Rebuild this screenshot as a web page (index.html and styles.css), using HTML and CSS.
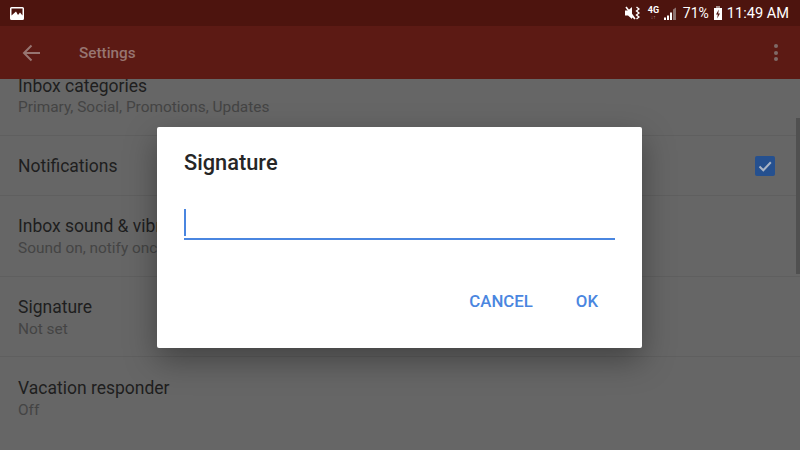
FILE: index.html
```html
<!DOCTYPE html>
<html lang="en">
  <head>
    <meta charset="UTF-8" />
    <meta name="viewport" content="width=device-width, initial-scale=1.0" />
    <title>Settings</title>
    <link rel="stylesheet" href="styles.css">
  </head>
  <body>
    <div class="status-bar">
      <svg class="pic-icon" width="14" height="13" viewBox="0 0 14 13">
        <path fill="#fff" d="M1.5 0h11A1.5 1.5 0 0 1 14 1.5v10a1.5 1.5 0 0 1-1.500 1.500h-11A1.500 1.500 0 0 1 0 11.500v-10A1.500 1.500 0 0 1 1.500 0z"/>
        <path fill="#4d140e" d="M1.500 1.500h11v7l-2.500-3-2 2.500-2-3.500-4.500 4z"/>
      </svg>
      <div class="status-right">
        <svg class="mute-icon" width="15" height="14" viewBox="0 0 15 14">
          <path fill="#fff" d="M0 4.500h3L7 1v10.500L10 13 1 2.500 7 9v4L3 9.500H0z"/>
          <path fill="none" stroke="#fff" stroke-width="1.500" d="M1 1l9 12"/>
          <path fill="none" stroke="#fff" stroke-width="1.400" d="M11.500 1l2.500 2-2.500 2 2.500 2-2.500 2 2.500 2-2.500 2"/>
        </svg>
        <div class="net-type">4G<span class="net-arrows">↓↑</span></div>
        <svg class="signal-icon" width="13" height="13" viewBox="0 0 13 13">
          <path fill="#fff" d="M0 10.500h2V13H0zM3 8.500h2V13H3zM6 5.500h2V13H6z"/>
          <path fill="#8d7370" d="M9 2.500l3-2V13H9z"/>
        </svg>
        <span class="pct">71%</span>
        <svg class="batt-icon" width="8" height="14" viewBox="0 0 8 14">
          <path fill="#a58f8c" d="M2 0h4v2H2z"/>
          <path fill="#fff" d="M0 2h8v12H0z"/>
          <path fill="#4d140e" d="M4.800 3.500L2 8.500h1.800L3.200 12.500 6 7.500H4.200z"/>
        </svg>
        <span class="clock">11:49 AM</span>
      </div>
    </div>

    <div class="toolbar">
      <svg class="back-icon" width="18" height="18" viewBox="0 0 18 18">
        <path fill="none" stroke="#977571" stroke-width="2" d="M18 9H2M9.500 1.500L2 9l7.500 7.500"/>
      </svg>
      <div class="toolbar-title">Settings</div>
      <div class="more-dots"><i></i><i></i><i></i></div>
    </div>

    <div class="list">
      <div class="row row-first">
        <div class="row-text">
          <div class="row-title">Inbox categories</div>
          <div class="row-sub">Primary, Social, Promotions, Updates</div>
        </div>
      </div>
      <div class="row row-short">
        <div class="row-text">
          <div class="row-title">Notifications</div>
        </div>
        <div class="checkbox">
          <svg width="20" height="20" viewBox="0 0 20 20">
            <path fill="none" stroke="#aab5c6" stroke-width="2" d="M4.500 10.500l3.800 3.700 7.500-8"/>
          </svg>
        </div>
      </div>
      <div class="row">
        <div class="row-text">
          <div class="row-title">Inbox sound &amp; vibrate</div>
          <div class="row-sub">Sound on, notify once</div>
        </div>
      </div>
      <div class="row row-narrow">
        <div class="row-text">
          <div class="row-title">Signature</div>
          <div class="row-sub">Not set</div>
        </div>
      </div>
      <div class="row row-last">
        <div class="row-text">
          <div class="row-title">Vacation responder</div>
          <div class="row-sub">Off</div>
        </div>
      </div>
      <div class="scrollbar"></div>
    </div>

    <div class="dialog-layer">
      <div class="dialog">
        <div class="dialog-title">Signature</div>
        <div class="field"><span class="caret"></span></div>
        <div class="dialog-actions">
          <span class="btn">CANCEL</span>
          <span class="btn">OK</span>
        </div>
      </div>
    </div>
  </body>
</html>
```

FILE: styles.css
```css
* {
  margin: 0;
  padding: 0;
  box-sizing: border-box;
}
body {
  position: relative;
  width: 800px;
  height: 450px;
  overflow: hidden;
  background-color: #666;
  font-family: Roboto, "Liberation Sans", sans-serif;
}
.status-bar {
  position: relative;
  z-index: 2;
  height: 26px;
  display: flex;
  justify-content: space-between;
  align-items: center;
  padding: 0 11px 0 10px;
  background-color: #4d140e;
  color: #fff;
}
.status-right {
  display: flex;
  align-items: center;
}
.mute-icon {
  margin-right: 8px;
}
.net-type {
  width: 11px;
  margin-right: 5px;
  font-size: 9px;
  font-weight: 700;
  line-height: 9px;
  text-align: center;
}
.net-arrows {
  display: block;
  font-size: 5px;
  line-height: 5px;
  color: #a58f8c;
}
.signal-icon {
  margin-right: 6px;
}
.pct {
  margin-right: 5px;
  font-size: 14px;
}
.batt-icon {
  margin-right: 5px;
}
.clock {
  font-size: 14.600px;
}
.toolbar {
  position: relative;
  z-index: 1;
  height: 53px;
  display: flex;
  align-items: center;
  padding: 0 22px;
  background-color: #5c1a14;
}
.back-icon {
  margin-right: 39px;
}
.toolbar-title {
  flex: 1;
  font-size: 15.300px;
  font-weight: 500;
  color: #977571;
}
.more-dots {
  display: flex;
  flex-direction: column;
  gap: 2.500px;
}
.more-dots i {
  width: 4px;
  height: 4px;
  border-radius: 50%;
  background-color: #7f6a67;
}
.list {
  position: relative;
  height: 371px;
}
.row {
  height: 81px;
  display: flex;
  align-items: center;
  justify-content: space-between;
  padding: 3px 25px 0 18px;
  border-bottom: 1px solid #5f5f5f;
}
.row-first {
  height: 57px;
  align-items: flex-start;
  padding-top: 0;
}
.row-short {
  height: 60px;
  padding-top: 2px;
}
.row-narrow {
  height: 80px;
}
.row-last {
  border-bottom: 0;
}
.row-title {
  font-size: 17.500px;
  line-height: 21px;
  color: #1e1e1e;
}
.row-sub {
  margin-top: 1px;
  font-size: 15.400px;
  line-height: 21px;
  color: #444;
}
.row-first .row-title {
  line-height: 14px;
}
.row-first .row-sub {
  margin-top: 3px;
  line-height: 22px;
}
.checkbox {
  width: 20px;
  height: 20px;
  margin-top: -2px;
  border-radius: 2px;
  background-color: #25508f;
}
.checkbox svg {
  display: block;
}
.scrollbar {
  position: absolute;
  top: 39px;
  right: 0;
  width: 4px;
  height: 156px;
  background-color: #505050;
}
.dialog-layer {
  position: absolute;
  z-index: 3;
  top: 26px;
  left: 0;
  right: 0;
  bottom: 0;
  display: flex;
  align-items: center;
  justify-content: center;
  padding: 0 1px 2px 0;
}
.dialog {
  width: 485px;
  height: 221px;
  padding: 22px 27px 0;
  border-radius: 2px;
  background-color: #fff;
  box-shadow: 0 12px 32px rgba(0, 0, 0, 0.35);
}
.dialog-title {
  font-size: 21.800px;
  font-weight: 500;
  line-height: 28px;
  color: #262626;
}
.field {
  height: 41px;
  margin-top: 22px;
  padding-top: 10px;
  border-bottom: 2px solid #4a86e0;
}
.caret {
  display: block;
  width: 2px;
  height: 27px;
  background-color: #4a86e0;
}
.dialog-actions {
  display: flex;
  justify-content: flex-end;
  gap: 43px;
  margin-top: 51px;
  padding-right: 17px;
}
.btn {
  font-size: 16.800px;
  font-weight: 500;
  line-height: 20px;
  color: #4a86e0;
}
```
